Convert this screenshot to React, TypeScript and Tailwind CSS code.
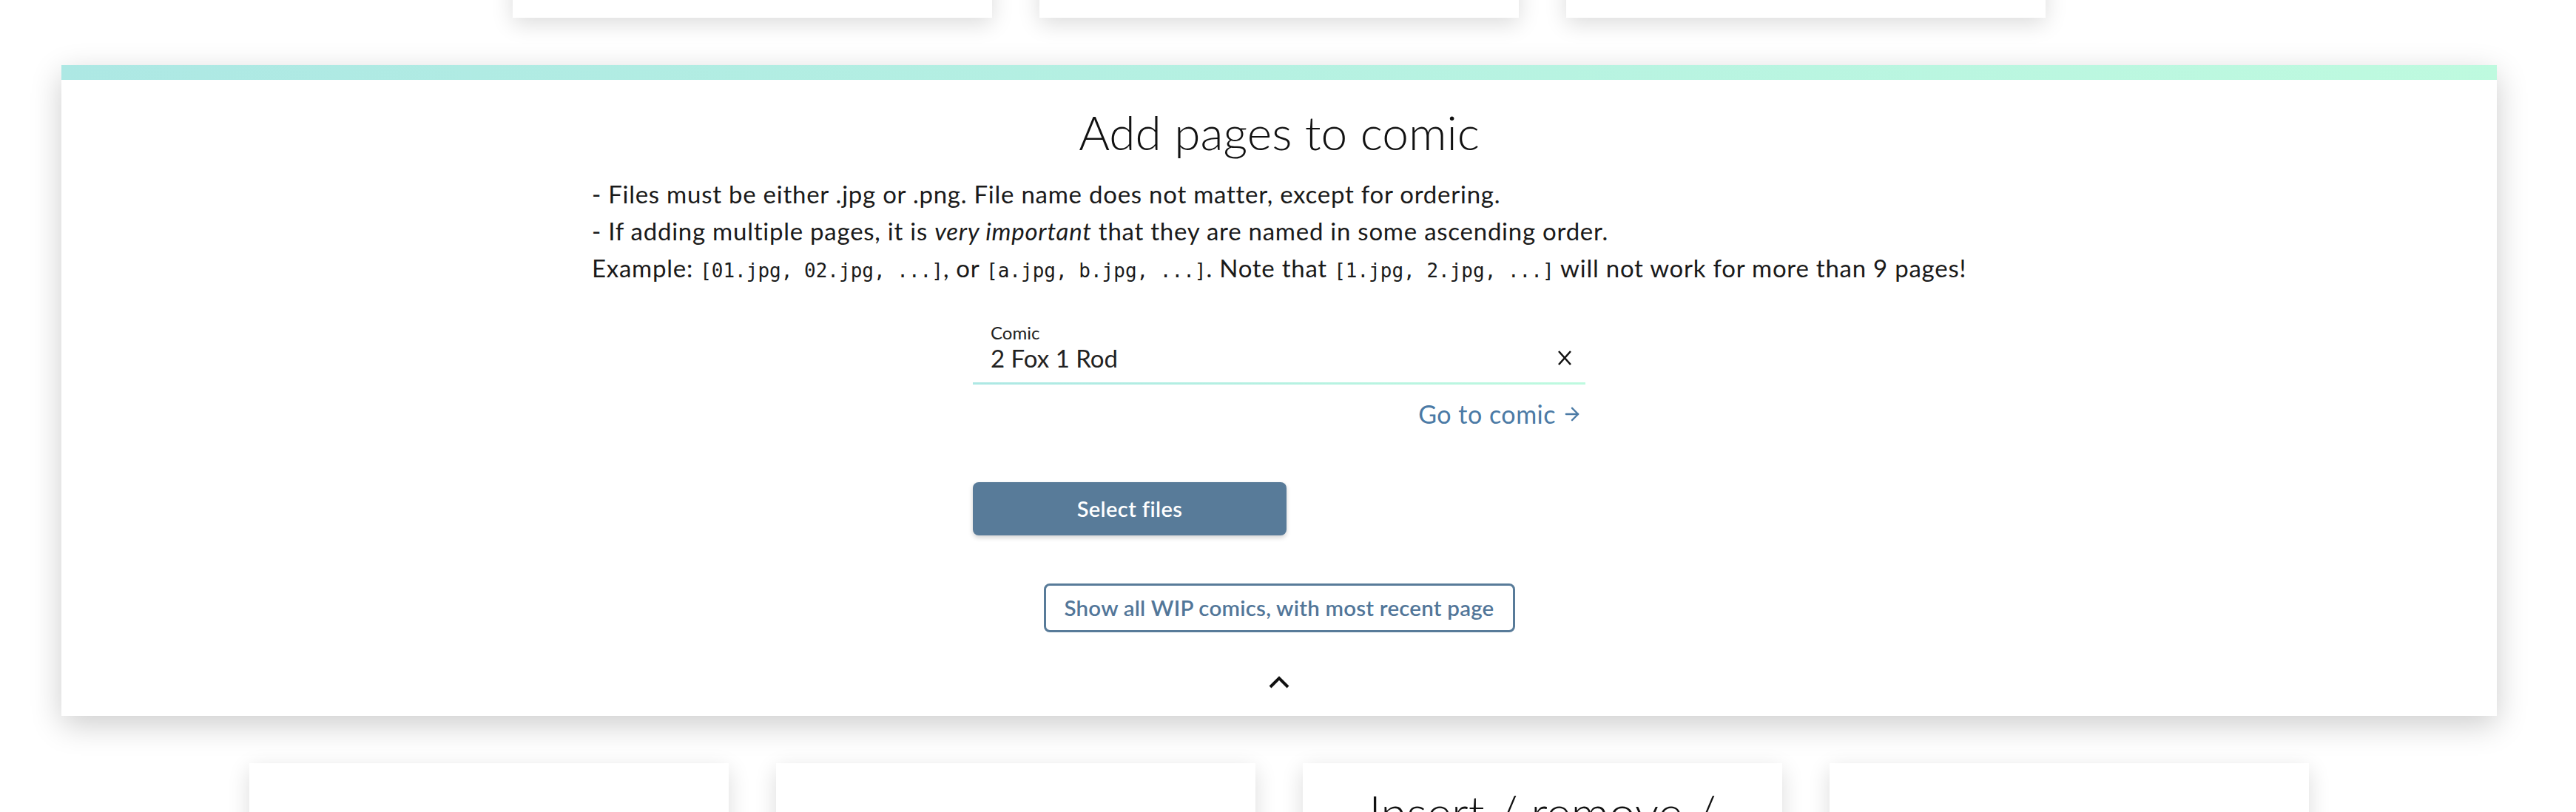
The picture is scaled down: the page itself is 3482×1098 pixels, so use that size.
import React from "react";

function Card({ children }: { children?: React.ReactNode }) {
  return (
    <div className="w-[648px] shrink-0 bg-white shadow-[0_8px_28px_rgba(0,0,0,0.14)]">{children}</div>
  );
}

export default function App() {
  return (
    <div className="w-[3458px] bg-white text-[#111] overflow-hidden h-[1098px] font-['Lato','Open_Sans',sans-serif]">
      {/* top cards, scrolled mostly out of view */}
      <div className="flex justify-center gap-[64px] -mt-[276px]">
        <Card><div className="h-[300px]" /></Card>
        <Card><div className="h-[300px]" /></Card>
        <Card><div className="h-[300px]" /></Card>
      </div>

      {/* main panel */}
      <div className="mx-[83px] mt-[64px] bg-white shadow-[0_12px_40px_rgba(0,0,0,0.2)]">
        <div className="h-[20px] bg-gradient-to-r from-[#ade8e4] to-[#befadf]" />
        <div className="flex flex-col items-center pt-[33px] pb-[37px]">
          <h1 className="text-[64px] leading-[75px] font-light text-[#111]">Add pages to comic</h1>

          <div className="mt-[21px] w-fit text-[33px] leading-[50px] tracking-[0.75px] text-[#1a1a1a]">
            <p>- Files must be either .jpg or .png. File name does not matter, except for ordering.</p>
            <p>
              - If adding multiple pages, it is <i>very important</i> that they are named in some ascending order.
            </p>
            <p>
              Example:{" "}
              <code className="font-['DejaVu_Sans_Mono',monospace] text-[26px] tracking-normal">[01.jpg, 02.jpg, ...]</code>, or{" "}
              <code className="font-['DejaVu_Sans_Mono',monospace] text-[26px] tracking-normal">[a.jpg, b.jpg, ...]</code>. Note that{" "}
              <code className="font-['DejaVu_Sans_Mono',monospace] text-[26px] tracking-normal">[1.jpg, 2.jpg, ...]</code> will not work
              for more than 9 pages!
            </p>
          </div>

          {/* comic input */}
          <div className="mt-[45px] w-[828px]">
            <div className="px-[24px]">
              <div className="text-[24px] leading-[28px] text-[#222]">Comic</div>
              <div className="flex items-center justify-between h-[40px]">
                <span className="text-[33px] leading-[40px] text-[#222]">2 Fox 1 Rod</span>
                <svg width="20" height="22" viewBox="0 0 20 22" className="mr-[-6px]">
                  <path d="M2 2 L18 20 M18 2 L2 20" stroke="#111" strokeWidth="2.6" fill="none" />
                </svg>
              </div>
            </div>
            <div className="mt-[13px] h-[3px] bg-gradient-to-r from-[#ade8e4] to-[#befadf]" />
            <div className="mt-[20px] flex justify-end pr-[4px]">
              <a className="flex items-center gap-[8px] text-[34px] leading-[40px] tracking-[0.5px] text-[#4b7aa5]">
                Go to comic
                <svg width="28" height="28" viewBox="0 0 24 24" fill="none" stroke="#4b7aa5" strokeWidth="2" strokeLinecap="round" strokeLinejoin="round">
                  <path d="M5 12h14" />
                  <path d="m12 5 7 7-7 7" />
                </svg>
              </a>
            </div>
            <button className="mt-[72px] w-[424px] h-[72px] rounded-[8px] bg-[#587b99] text-white text-[29px] font-semibold tracking-[0.4px] shadow-[0_3px_6px_rgba(0,0,0,0.18)]">
              Select files
            </button>
          </div>

          <button className="mt-[65px] w-[637px] h-[66px] rounded-[8px] border-[3px] border-[#587b99] text-[#527699] text-[29.5px] font-semibold tracking-[0.2px]">
            Show all WIP comics, with most recent page
          </button>

          <svg width="28" height="17" viewBox="0 0 28 17" className="mt-[59px]">
            <path d="M2 15 L14 3 L26 15" stroke="#111" strokeWidth="4" fill="none" />
          </svg>
        </div>
      </div>

      {/* bottom cards */}
      <div className="flex justify-center gap-[64px] mt-[64px]">
        <Card><div className="h-[300px]" /></Card>
        <Card><div className="h-[300px]" /></Card>
        <Card>
          <div className="h-[300px] px-[40px] pt-[28px]">
            <h2 className="text-center text-[64px] leading-[75px] font-light text-[#111]">Insert / remove / replace pages</h2>
          </div>
        </Card>
        <Card><div className="h-[300px]" /></Card>
      </div>
    </div>
  );
}
